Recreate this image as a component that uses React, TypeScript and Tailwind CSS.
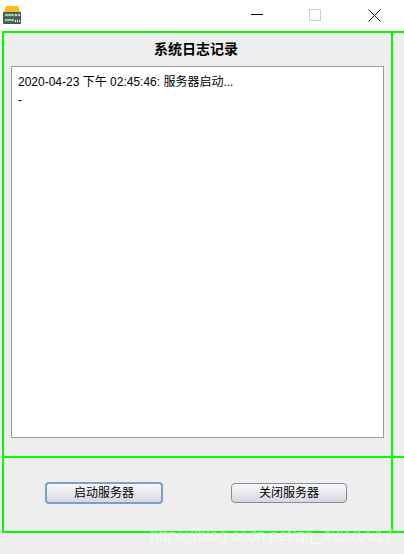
const fontStack = '"Liberation Sans", "Noto Sans CJK SC", sans-serif';

function ServerIcon() {
  return (
    <svg width="18" height="18" viewBox="0 0 18 18" className="block">
      <path d="M2.5 0h13l1.5 6H1z" fill="#fdb92c" />
      <rect x="0" y="6" width="18" height="12" rx="1" fill="#47535c" />
      <rect x="1" y="7" width="16" height="4" fill="#5d6a72" />
      <rect x="1" y="12" width="16" height="5" fill="#55626a" />
      <rect x="2" y="8" width="9" height="2" fill="#8ed08a" />
      <rect x="2" y="13" width="9" height="2" fill="#8ed08a" />
      <rect x="12" y="8" width="2" height="2" fill="#c4ced4" />
      <rect x="15" y="8" width="2" height="2" fill="#c4ced4" />
      <rect x="12" y="14" width="1" height="2" fill="#e6ecef" />
      <rect x="14" y="14" width="1" height="2" fill="#e6ecef" />
      <rect x="16" y="14" width="1" height="2" fill="#e6ecef" />
    </svg>
  );
}

function TitleBar() {
  return (
    <div className="flex h-[31px] items-start bg-white">
      <div className="mt-[6px] ml-[3px]">
        <ServerIcon />
      </div>
      <div className="mt-[9px] ml-auto flex items-start">
        <div className="mt-[5px] mr-[46px] h-[1px] w-[12px] bg-black" />
        <div className="mr-[47px] h-[12px] w-[12px] border border-[#cccccc]" />
        <svg width="13" height="13" viewBox="0 0 13 13" className="mr-[23px]">
          <path d="M0.5 0.5l12 12M12.5 0.5l-12 12" stroke="#111" strokeWidth="1" fill="none" />
        </svg>
      </div>
    </div>
  );
}

function DialogButton({ label, focused }: { label: string; focused?: boolean }) {
  return (
    <button
      className={`flex items-center justify-center rounded-[4px] bg-gradient-to-b from-[#f8f8fa] via-[#e9eaef] to-[#d6d8e1] text-[12px] text-black ${
        focused
          ? 'h-[22px] w-[118px] border-2 border-[#7c9fc4]'
          : 'h-[20px] w-[116px] border border-[#8a8c94]'
      }`}
    >
      {label}
    </button>
  );
}

export default function App() {
  return (
    <div className="relative h-[554px] w-[404px] overflow-hidden bg-[#eeeeee]" style={{ fontFamily: fontStack }}>
      <TitleBar />
      <div className="ml-[2px] border-y-2 border-l-2 border-[#00ff00]">
        <div className="flex h-[423px]">
          <div className="flex w-[389px] flex-col border-r-2 border-[#00ff00]">
            <h1 className="mt-[6px] ml-[-3px] text-center text-[14px] leading-[20px] font-bold text-black">系统日志记录</h1>
            <div className="mt-[7px] ml-[7px] h-[372px] w-[373px] border border-[#9a9da5] bg-white px-[6px] py-[6px] text-[12px] leading-[18px] text-black">
              <p>2020-04-23 下午 02:45:46: 服务器启动...</p>
              <p>-</p>
            </div>
          </div>
        </div>
        <div className="flex h-[75px] border-t-2 border-[#00ff00]">
          <div className="flex w-[389px] items-center border-r-2 border-[#00ff00] pb-[3px]">
            <div className="mr-[68px] ml-[41px]">
              <DialogButton label="启动服务器" focused />
            </div>
            <DialogButton label="关闭服务器" />
          </div>
        </div>
      </div>
      <span className="absolute top-[526px] left-[150px] text-[15.8px] leading-[20px] whitespace-nowrap text-white/55">
        https://blog.csdn.net/qq_42376617
      </span>
    </div>
  );
}
